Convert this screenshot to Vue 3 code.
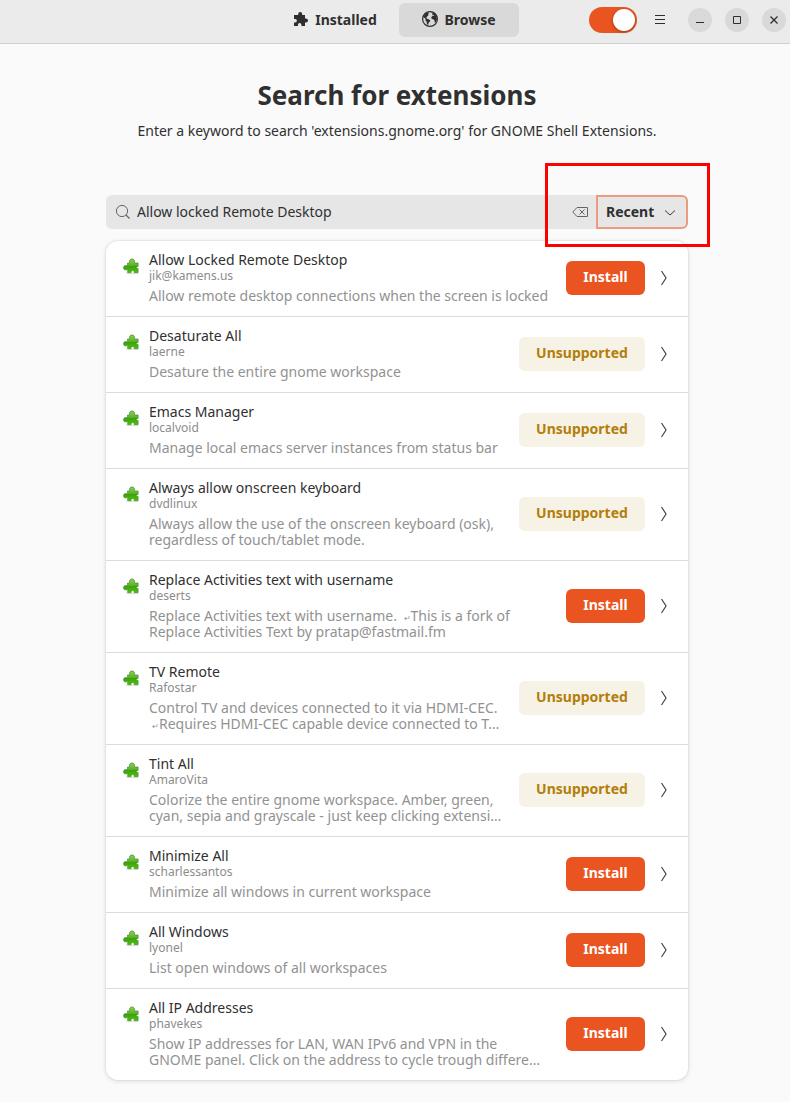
<script setup>
import { ref } from 'vue'

const query = ref('Allow locked Remote Desktop')
const sort = ref('Recent')
const enabled = ref(true)
const tab = ref('browse')

const extensions = [
  { name: 'Allow Locked Remote Desktop', author: 'jik@kamens.us', ok: true, lines: ['Allow remote desktop connections when the screen is locked'] },
  { name: 'Desaturate All', author: 'laerne', ok: false, lines: ['Desature the entire gnome workspace'] },
  { name: 'Emacs Manager', author: 'localvoid', ok: false, lines: ['Manage local emacs server instances from status bar'] },
  { name: 'Always allow onscreen keyboard', author: 'dvdlinux', ok: false, lines: ['Always allow the use of the onscreen keyboard (osk),', 'regardless of touch/tablet mode.'] },
  { name: 'Replace Activities text with username', author: 'deserts', ok: true, lines: ['Replace Activities text with username. ↵This is a fork of', 'Replace Activities Text by pratap@fastmail.fm'] },
  { name: 'TV Remote', author: 'Rafostar', ok: false, lines: ['Control TV and devices connected to it via HDMI-CEC.', '↵Requires HDMI-CEC capable device connected to T…'] },
  { name: 'Tint All', author: 'AmaroVita', ok: false, lines: ['Colorize the entire gnome workspace. Amber, green,', 'cyan, sepia and grayscale - just keep clicking extensi…'] },
  { name: 'Minimize All', author: 'scharlessantos', ok: true, lines: ['Minimize all windows in current workspace'] },
  { name: 'All Windows', author: 'lyonel', ok: true, lines: ['List open windows of all workspaces'] },
  { name: 'All IP Addresses', author: 'phavekes', ok: true, lines: ['Show IP addresses for LAN, WAN IPv6 and VPN in the', 'GNOME panel. Click on the address to cycle trough differe…'] }
]

// Splits a line around the return mark, which is drawn smaller than the text.
const parts = (line) => line.split(/(↵)/).filter((p) => p)
</script>

<template>
  <div class="window">
    <header class="bar">
      <nav class="tabs">
        <button class="tab" :class="{ active: tab === 'installed' }" type="button" @click="tab = 'installed'">
          <svg width="16" height="16" viewBox="0 0 16 16" aria-hidden="true">
            <path d="M1 4h4.200V3a2 2 0 0 1 4 0v1H12v3.600h1a2 2 0 0 1 0 4h-1V15H8.400v-1.400a1.700 1.700 0 0 0-3.400 0V15H1v-3.600h1.200a1.700 1.700 0 0 0 0-3.400H1z" fill="#2e2e2e" />
          </svg>
          Installed
        </button>
        <button class="tab" :class="{ active: tab === 'browse' }" type="button" @click="tab = 'browse'">
          <svg width="16" height="16" viewBox="0 0 16 16" aria-hidden="true">
            <circle cx="8" cy="8" r="7.400" fill="none" stroke="#2e2e2e" stroke-width="1.200" />
            <path d="M1.500 5.500 3.500 2.500 6 1.500 7.200 2 5.800 3.200 6.800 4 5 5.500 4.200 7.200 5.800 8 8 9 8.200 10.200 6.600 11.800 6.200 14 5 13.300 4.600 10.800 3.400 9.200 3.600 7.800 2.200 6.800z M9 1.200 12.500 2.500 14.500 5.500 15 8.500 13.600 11.500 12.800 12 12.600 9.800 11.400 8.200 9.800 8 9.200 6.400 10.400 5 12 5 11.600 4 10.200 4.200 10.600 2.800z" fill="#2e2e2e" />
          </svg>
          Browse
        </button>
      </nav>
      <div class="controls">
        <input v-model="enabled" class="switch" type="checkbox" role="switch" aria-label="Extensions enabled">
        <button class="menu" type="button" aria-label="Menu">
          <svg width="12" height="12" viewBox="0 0 12 12"><path d="M1 1.500h10M1 5.500h10M1 9.500h10" stroke="#2e2e2e" /></svg>
        </button>
        <button class="round" type="button" aria-label="Minimize">
          <svg width="10" height="10" viewBox="0 0 10 10"><path d="M1 7.500h8" stroke="#2e2e2e" /></svg>
        </button>
        <button class="round" type="button" aria-label="Maximize">
          <svg width="10" height="10" viewBox="0 0 10 10"><path d="M1.500 1.500h7v7h-7z" fill="none" stroke="#2e2e2e" /></svg>
        </button>
        <button class="round" type="button" aria-label="Close">
          <svg width="10" height="10" viewBox="0 0 10 10"><path d="M1.500 1.500l7 7M8.500 1.500l-7 7" stroke="#2e2e2e" stroke-width="1.300" /></svg>
        </button>
      </div>
    </header>

    <main>
      <h1>Search for extensions</h1>
      <p class="hint">Enter a keyword to search 'extensions.gnome.org' for GNOME Shell Extensions.</p>

      <form class="search" @submit.prevent>
        <svg class="lens" width="16" height="16" viewBox="0 0 16 16" aria-hidden="true">
          <circle cx="7" cy="7" r="5.600" fill="none" stroke="#666" /><path d="M11 11l3.500 3.500" stroke="#666" stroke-width="1.200" />
        </svg>
        <input v-model="query" class="query" type="text" aria-label="Search keyword">
        <button class="clear" type="button" aria-label="Clear" @click="query = ''">
          <svg width="16" height="12" viewBox="0 0 16 12"><path d="M5 1.500h10.500v9H5L.8 6z M7.500 3.500l5 5M12.500 3.500l-5 5" fill="none" stroke="#666" /></svg>
        </button>
        <div class="sort">
          <select v-model="sort" aria-label="Sort order">
            <option>Recent</option>
            <option>Downloads</option>
            <option>Popularity</option>
            <option>Name</option>
          </select>
          <svg width="12" height="8" viewBox="0 0 12 8" aria-hidden="true"><path d="M1 1.500l5 4.500 5-4.500" fill="none" stroke="#3a3a3a" /></svg>
        </div>
        <div class="marker"></div>
      </form>

      <svg class="paints" width="0" height="0" aria-hidden="true">
        <defs>
          <linearGradient id="leaf" x1="0" y1="0" x2="0" y2="1">
            <stop offset="0" stop-color="#86cf55" /><stop offset=".45" stop-color="#62b52f" /><stop offset=".55" stop-color="#3da30c" /><stop offset="1" stop-color="#4cc20d" />
          </linearGradient>
        </defs>
      </svg>
      <ul class="list">
        <li v-for="e in extensions" :key="e.name" class="row">
          <svg class="piece" width="16" height="16" viewBox="0 0 16 16" aria-hidden="true">
            <path d="M3 15.300h12" stroke="#ddd" />
            <path d="M4.500 5h2.300C5.700 3 6.900.9 9 .9s3.300 2.100 2.200 4.100h3.900v3.500c-2-.6-2.200 2.400 0 2v4.200h-3.900c.5-2.900-3.600-2.900-3.100 0H4.700v-3.400C2.600 12.600.5 11.800.5 9.800S2.600 7 4.500 8z" fill="url(#leaf)" stroke="#4a8f2c" stroke-width=".7" />
          </svg>
          <div class="info">
            <h2>{{ e.name }}</h2>
            <p class="author">{{ e.author }}</p>
            <p class="desc">
              <span v-for="line in e.lines" :key="line" class="line"><template v-for="p in parts(line)" :key="p"><span v-if="p === '↵'" class="ret">{{ p }}</span><template v-else>{{ p }}</template></template></span>
            </p>
          </div>
          <button class="action" :class="e.ok ? 'install' : 'unsupported'" type="button" :disabled="!e.ok">{{ e.ok ? 'Install' : 'Unsupported' }}</button>
          <button class="more" type="button" :aria-label="'Details of ' + e.name">
            <svg width="8" height="16" viewBox="0 0 8 16"><path d="M1.500 1l4.500 7-4.500 7" fill="none" stroke="#444" stroke-width="1.200" /></svg>
          </button>
        </li>
      </ul>
    </main>
  </div>
</template>

<style>
body { background: #fafafa; }
</style>

<style scoped>
.window { font-family: "Noto Sans", "Open Sans", sans-serif; font-size: 14px; color: #303030; }
.window * { box-sizing: border-box; }
button, input, select { font: inherit; color: inherit; border: 0; margin: 0; padding: 0; background: none; }
svg { display: block; flex: none; }
h1, h2, p, ul { margin: 0; padding: 0; }
.paints { position: absolute; }

.bar { display: grid; grid-template-columns: 1fr auto 1fr; height: 44px; padding: 3px 4px 0; background: #ebebeb; border-bottom: 1px solid #cfcfcf; }
.tabs { grid-column: 2; display: flex; gap: 4px; margin-left: 4px; }
.tab { display: flex; align-items: center; justify-content: center; gap: 6px; width: 120px; height: 34px; padding-bottom: 2px; border-radius: 6px; font-weight: 700; }
.tab.active { background: #d9d9d9; }
.controls { display: flex; align-items: center; justify-content: flex-end; height: 34px; }
.switch { appearance: none; width: 48px; height: 26px; padding: 2px; border-radius: 13px; background: #c4c4c4; }
.switch::before { content: ""; display: block; width: 22px; height: 22px; border-radius: 50%; background: #fff; box-shadow: 0 1px 3px rgba(0, 0, 0, .35); }
.switch:checked { padding-left: 24px; background: #e95420; }
.menu { display: grid; place-items: center; width: 34px; height: 34px; margin: 0 11px 0 6px; }
.round { display: grid; place-items: center; width: 24px; height: 24px; border-radius: 50%; background: #d9d9d9; }
.round + .round { margin-left: 13px; }

main { padding: 33px 102px 22px 106px; }
h1 { font-size: 26px; line-height: 36px; font-weight: 700; text-align: center; white-space: nowrap; }
.hint { margin-top: 8px; line-height: 20px; text-align: center; white-space: nowrap; }

.search { position: relative; display: flex; align-items: center; height: 34px; margin-top: 54px; border-radius: 6px; background: #e6e6e6; }
.lens { margin: 0 6px 0 9px; }
.query { flex: 1; min-width: 0; height: 34px; padding-bottom: 2px; outline: none; }
.clear { margin: 0 8px; }
.sort { position: relative; width: 92px; height: 34px; }
.sort select { appearance: none; width: 100%; height: 34px; padding: 0 0 2px 8px; border: 2px solid #eb9b7e; border-radius: 0 6px 6px 0; font-weight: 700; outline: none; }
.sort svg { position: absolute; right: 12px; top: 14px; pointer-events: none; }
.marker { position: absolute; top: -32px; right: -22px; width: 165px; height: 84px; border: 3px solid #f00; pointer-events: none; }

.list { margin-top: 12px; list-style: none; border-radius: 12px; background: #fff; box-shadow: 0 0 0 1px rgba(0, 0, 0, .04), 0 1px 4px 1px rgba(0, 0, 0, .09); }
.row { display: flex; align-items: center; padding: 10px 17px 12px; }
.row + .row { border-top: 1px solid #dcdcdc; }
.piece { align-self: flex-start; margin: 7px 10px 0 0; }
.info { flex: 1; min-width: 0; }
h2 { font-size: 14px; line-height: 18px; font-weight: 400; }
.author { font-size: 12px; line-height: 14px; color: #8c8c8c; }
.desc { margin-top: 5px; line-height: 16px; color: #929292; }
.line { display: block; white-space: nowrap; }
.ret { padding-left: 3px; font-size: 8px; line-height: 8px; }
.action { height: 34px; margin-right: 11px; padding-bottom: 2px; border-radius: 6px; font-weight: 700; }
.install { width: 79px; background: #e95420; color: #fff; }
.unsupported { width: 126px; background: #f6f2e6; color: #b37e0a; }
.more { display: grid; place-items: center; width: 15px; height: 34px; }
</style>
